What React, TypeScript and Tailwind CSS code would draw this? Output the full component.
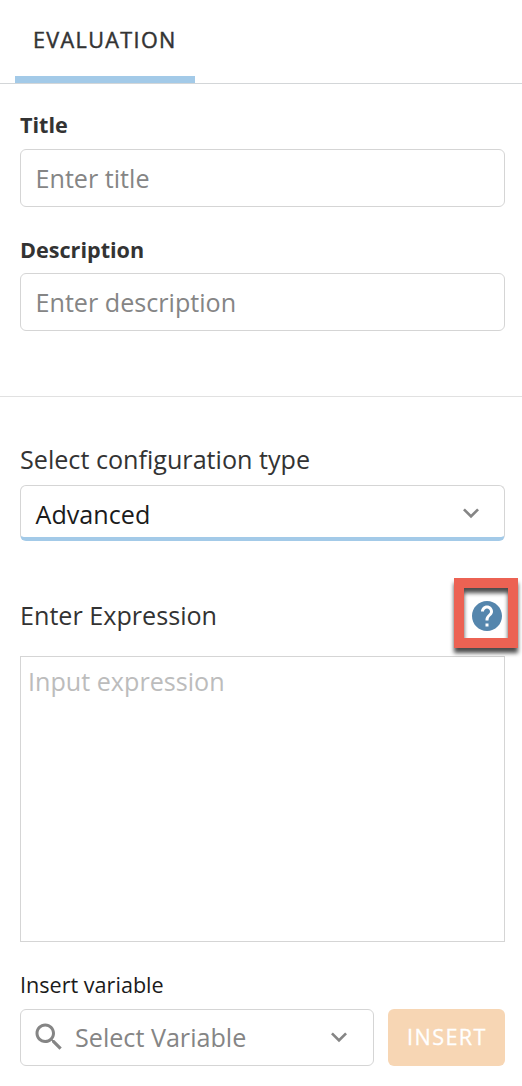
import type { ReactNode } from "react";

function Chevron() {
  return (
    <svg viewBox="0 0 24 24" className="size-8 shrink-0 fill-[#858585]">
      <path d="M16.59 8.59 12 13.17 7.41 8.59 6 10l6 6 6-6z" />
    </svg>
  );
}

function Field({ label, placeholder }: { label: string; placeholder: string }) {
  return (
    <div className="flex grow flex-col justify-between">
      <div className="text-[21.6px] leading-[30px] font-bold">{label}</div>
      <div className="flex h-[58px] items-center rounded-[6px] border border-[#d5d5d5] px-[14.5px] text-[25.15px] text-[#858585]">
        <Text>{placeholder}</Text>
      </div>
    </div>
  );
}

function Text({ children }: { children: ReactNode }) {
  return <span className="whitespace-nowrap leading-[34px]">{children}</span>;
}

export default function App() {
  return (
    <main className="h-[1086px] w-full overflow-hidden bg-white font-['Open_Sans',sans-serif] text-[#333333]">
      <nav className="flex h-[84px] border-b border-[#d3d6d8] pl-[15px]">
        <div className="flex h-[83px] w-[180px] flex-col border-b-[7px] border-[#a3cae8] pt-[25px] pl-[18px]">
          <span className="text-[21.6px] leading-[30px] font-medium tracking-[1.35px] [-webkit-text-stroke:0.45px_#333333]">EVALUATION</span>
        </div>
      </nav>

      <section className="grid h-[313px] grid-rows-[97px_96px] content-start gap-7 border-b border-[#e1e1e1] pt-[26px] pr-[17px] pl-5">
        <Field label="Title" placeholder="Enter title" />
        <Field label="Description" placeholder="Enter description" />
      </section>

      <section className="pt-11 pr-[17px] pl-5">
        <div className="h-[44px] text-[25.15px]"><Text>Select configuration type</Text></div>
        <div className="flex h-14 items-center justify-between rounded-[6px] border border-b-4 border-[#d5d5d5] border-b-[#a3cae8] pt-[3px] pr-[17px] pl-[14.5px] text-[25.15px] text-[#1b1b1b]">
          <span className="pt-0.5 leading-[34px]">Advanced</span>
          <Chevron />
        </div>

        <div className="relative mt-[57px] flex h-[58px] items-start justify-between text-[25.15px]">
          <Text>Enter Expression</Text>
          <svg viewBox="0 0 24 24" className="size-9 fill-[#5586ad]">
            <path d="M12 2C6.48 2 2 6.48 2 12s4.48 10 10 10 10-4.48 10-10S17.52 2 12 2zm1 17h-2v-2h2v2zm2.07-7.75-.9.92C13.45 12.9 13 13.5 13 15h-2v-.5c0-1.1.45-2.1 1.17-2.83l1.24-1.26c.37-.36.59-.86.59-1.41 0-1.1-.9-2-2-2s-2 .9-2 2H8c0-2.21 1.79-4 4-4s4 1.79 4 4c0 .88-.36 1.68-.93 2.25z" />
          </svg>
          <div className="absolute -top-5 -right-[13px] h-[70px] w-16 border-10 border-[#ec6253] drop-shadow-[0_5px_2px_rgba(0,0,0,0.7)]" />
        </div>

        <div className="h-[286px] border border-[#d5d5d5] px-[7px] pt-1.5 text-[25.15px] text-[#bcbcbc]">
          <Text>Input expression</Text>
        </div>

        <div className="mt-[26px] h-[41px] text-[21.6px] text-[#1b1b1b]"><Text>Insert variable</Text></div>
        <div className="flex h-[57px] gap-[14px]">
          <div className="flex w-[354px] items-center rounded-[6px] border border-[#d5d5d5] pr-[18px] pb-0.5 pl-[10px] text-[25.15px] text-[#858585]">
            <svg viewBox="0 0 24 24" className="mr-2 size-9 shrink-0 fill-[#858585]">
              <path d="M15.5 14h-.79l-.28-.27C15.41 12.59 16 11.11 16 9.5 16 5.91 13.09 3 9.5 3S3 5.91 3 9.5 5.91 16 9.5 16c1.61 0 3.09-.59 4.23-1.57l.27.28v.79l5 4.99L20.49 19l-4.99-5zm-6 0C7.01 14 5 11.99 5 9.5S7.01 5 9.5 5 14 7.01 14 9.5 11.99 14 9.5 14z" />
            </svg>
            <Text>Select Variable</Text>
            <span className="grow" />
            <Chevron />
          </div>
          <button className="flex w-[117px] items-center justify-center rounded-[6px] bg-[#f7d6b4] pb-px pl-px text-[21.6px] font-medium tracking-[1.4px] text-white [-webkit-text-stroke:0.3px_white]">
            <Text>INSERT</Text>
          </button>
        </div>
      </section>
    </main>
  );
}
